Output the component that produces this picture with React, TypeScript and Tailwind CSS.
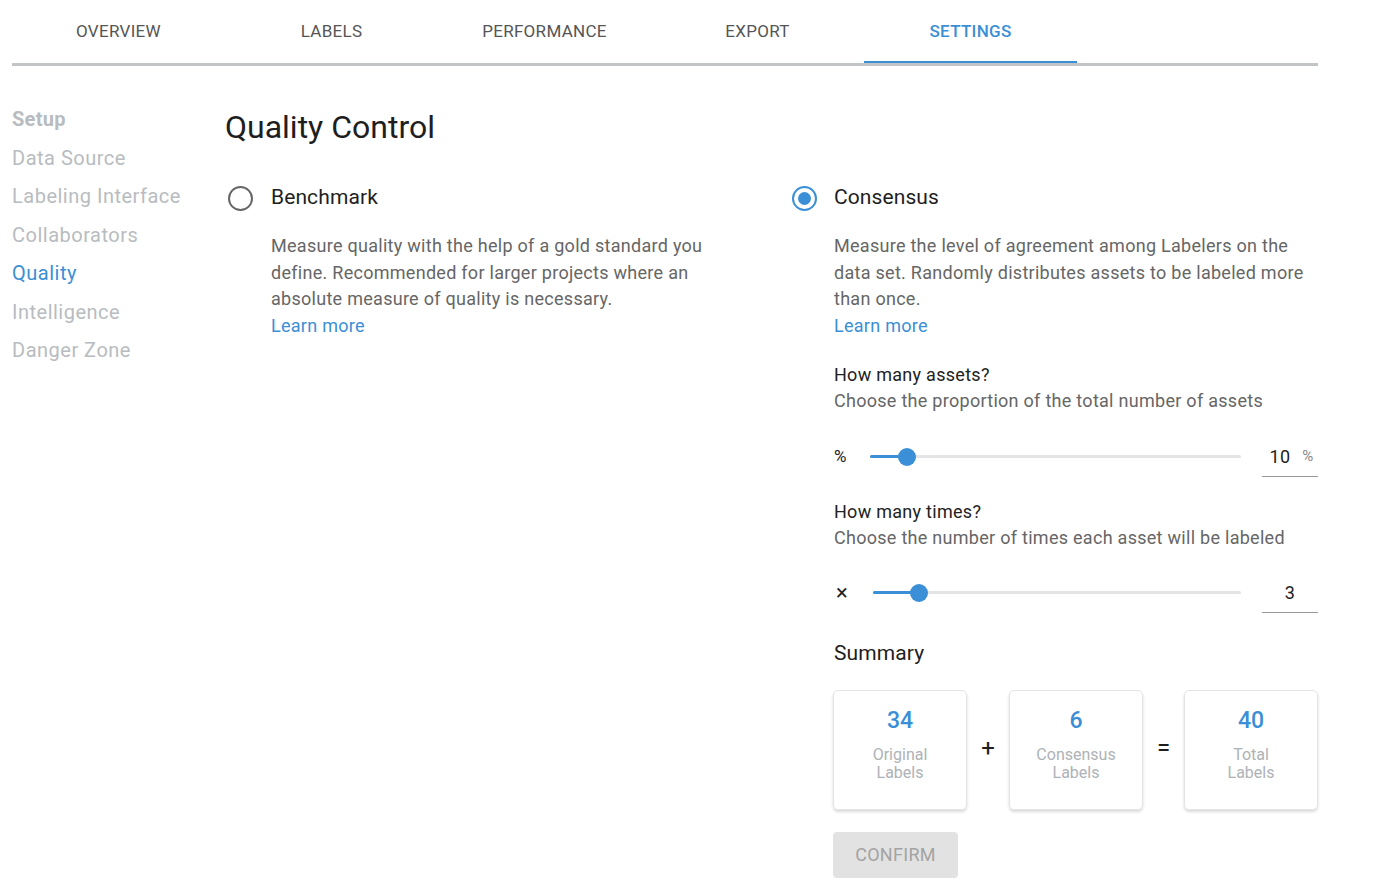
import React from 'react'

const tabs = ['OVERVIEW', 'LABELS', 'PERFORMANCE', 'EXPORT', 'SETTINGS']
const sideItems = ['Data Source', 'Labeling Interface', 'Collaborators', 'Quality', 'Intelligence', 'Danger Zone']

function Radio({ checked }: { checked?: boolean }) {
  return (
    <div className="w-[30px] h-[30px] flex items-center justify-center">
      {checked ? (
        <div className="w-[25px] h-[25px] rounded-full border-[2.5px] border-[#3b8fd6] flex items-center justify-center">
          <div className="w-[13px] h-[13px] rounded-full bg-[#3b8fd6]" />
        </div>
      ) : (
        <div className="w-[25px] h-[25px] rounded-full border-[2.5px] border-[#666]" />
      )}
    </div>
  )
}

function Slider({ prefix, value, suffix, pct, prefixCls }: { prefix: string; value: string; suffix?: string; pct: number; prefixCls: string }) {
  return (
    <div className="flex items-center h-[40px]">
      <div className={`${prefixCls} text-[#222] shrink-0`}>{prefix}</div>
      <div className="relative flex-1 h-[18px] flex items-center">
        <div className="w-full h-[3px] bg-[#e3e4e5] rounded" />
        <div className="absolute left-0 h-[3px] bg-[#3b8fd6] rounded" style={{ width: `${pct}%` }} />
        <div
          className="absolute w-[18px] h-[18px] rounded-full bg-[#3b8fd6] -translate-x-1/2"
          style={{ left: `${pct}%` }}
        />
      </div>
      <div className="ml-[21px] w-[56px] h-[40px] shrink-0 flex items-center border-b border-[#999]">
        <div className="flex-1 text-[18px] text-[#222] text-center">{value}</div>
        {suffix && <div className="w-[20px] text-[15px] text-[#888] text-center">{suffix}</div>}
      </div>
    </div>
  )
}

function SummaryCard({ n, a, b }: { n: string; a: string; b: string }) {
  return (
    <div className="w-[134px] h-[120px] rounded-[5px] border border-[#e2e4e6] shadow-[0_2px_3px_rgba(0,0,0,0.15)] flex flex-col items-center pt-[15px]">
      <div className="text-[23px] font-medium text-[#3b8fd6] leading-[30px]">{n}</div>
      <div className="mt-[10px] text-[16px] text-[#aeb2b6] leading-[18px] text-center">
        {a}
        <br />
        {b}
      </div>
    </div>
  )
}

export default function App() {
  return (
    <div className="w-[1400px] h-[893px] bg-white overflow-hidden font-['Roboto',sans-serif]">
      {/* Tabs */}
      <div className="ml-[12px] w-[1306px] h-[66px] flex border-b-[3px] border-[#c2c5c8]">
        {tabs.map((t) => (
          <div
            key={t}
            className={`relative w-[213px] flex items-center justify-center text-[17px] tracking-[0.3px] ${
              t === 'SETTINGS' ? 'text-[#3b8fd6] font-medium' : 'text-[#555]'
            }`}
          >
            {t}
            {t === 'SETTINGS' && <div className="absolute left-0 right-0 bottom-0 h-[2px] bg-[#3b8fd6]" />}
          </div>
        ))}
      </div>

      <div className="flex">
        {/* Sidebar */}
        <div className="w-[225px] pl-[12px] pt-[34px] shrink-0">
          <div className="text-[20px] font-bold tracking-[0.3px] text-[#b8bcc0] leading-[38.5px]">Setup</div>
          {sideItems.map((s) => (
            <div
              key={s}
              className={`text-[20px] tracking-[0.5px] leading-[38.5px] ${s === 'Quality' ? 'text-[#3b8fd6]' : 'text-[#b8bcc0]'}`}
            >
              {s}
            </div>
          ))}
        </div>

        {/* Main */}
        <div className="flex-1 pt-[41px]">
          <h1 className="text-[32px] leading-[40px] text-[#1e1e1e]">Quality Control</h1>

          <div className="flex mt-[36px]">
            {/* Benchmark */}
            <div className="w-[565px] shrink-0">
              <div className="flex items-center h-[30px]">
                <Radio />
                <span className="ml-[16px] text-[21px] tracking-[0.1px] text-[#1e1e1e]">Benchmark</span>
              </div>
              <div className="ml-[46px] mt-[20px] w-[450px] text-[18px] tracking-[0.28px] leading-[26.7px] text-[#666]">
                Measure quality with the help of a gold standard you define. Recommended for larger projects where an absolute measure of quality is necessary.
                <div className="text-[#3b8fd6]">Learn more</div>
              </div>
            </div>

            {/* Consensus */}
            <div className="w-[531px] shrink-0">
              <div className="flex items-center h-[30px] -ml-[1px]">
                <Radio checked />
                <span className="ml-[15px] text-[21px] tracking-[0.1px] text-[#1e1e1e]">Consensus</span>
              </div>
              <div className="ml-[44px] w-[484px] text-[18px] tracking-[0.28px]">
                <div className="mt-[20px] w-[478px] leading-[26.7px] text-[#666]">
                  Measure the level of agreement among Labelers on the data set. Randomly distributes assets to be labeled more than once.
                  <div className="text-[#3b8fd6]">Learn more</div>
                </div>

                <div className="mt-[22px] leading-[26.5px] text-[#222]">How many assets?</div>
                <div className="leading-[26.5px] text-[#666]">Choose the proportion of the total number of assets</div>

                <div className="mt-[22px]">
                  <Slider prefix="%" value="10" suffix="%" pct={10} prefixCls="w-[36px] text-[17px]" />
                </div>

                <div className="mt-[22px] leading-[26.5px] text-[#222]">How many times?</div>
                <div className="leading-[26.5px] text-[#666]">Choose the number of times each asset will be labeled</div>

                <div className="mt-[21px]">
                  <Slider prefix="×" value="3" pct={12.5} prefixCls="w-[39px] pl-[2px] text-[22px]" />
                </div>

                <div className="mt-[27px] text-[21px] tracking-[0.1px] leading-[26px] text-[#1e1e1e]">Summary</div>

                <div className="mt-[24px] flex items-center -ml-[1px] tracking-normal">
                  <SummaryCard n="34" a="Original" b="Labels" />
                  <div className="w-[42px] text-center text-[24px] leading-[24px] pb-[4px] text-[#1e1e1e]">+</div>
                  <SummaryCard n="6" a="Consensus" b="Labels" />
                  <div className="w-[41px] text-center text-[24px] leading-[24px] pb-[4px] text-[#1e1e1e]">=</div>
                  <SummaryCard n="40" a="Total" b="Labels" />
                </div>

                <button className="mt-[22px] -ml-[1px] w-[125px] h-[46px] rounded-[4px] bg-[#e2e2e2] text-[18px] tracking-[0.3px] text-[#a3a3a3]">
                  CONFIRM
                </button>
              </div>
            </div>
          </div>
        </div>
      </div>
    </div>
  )
}
